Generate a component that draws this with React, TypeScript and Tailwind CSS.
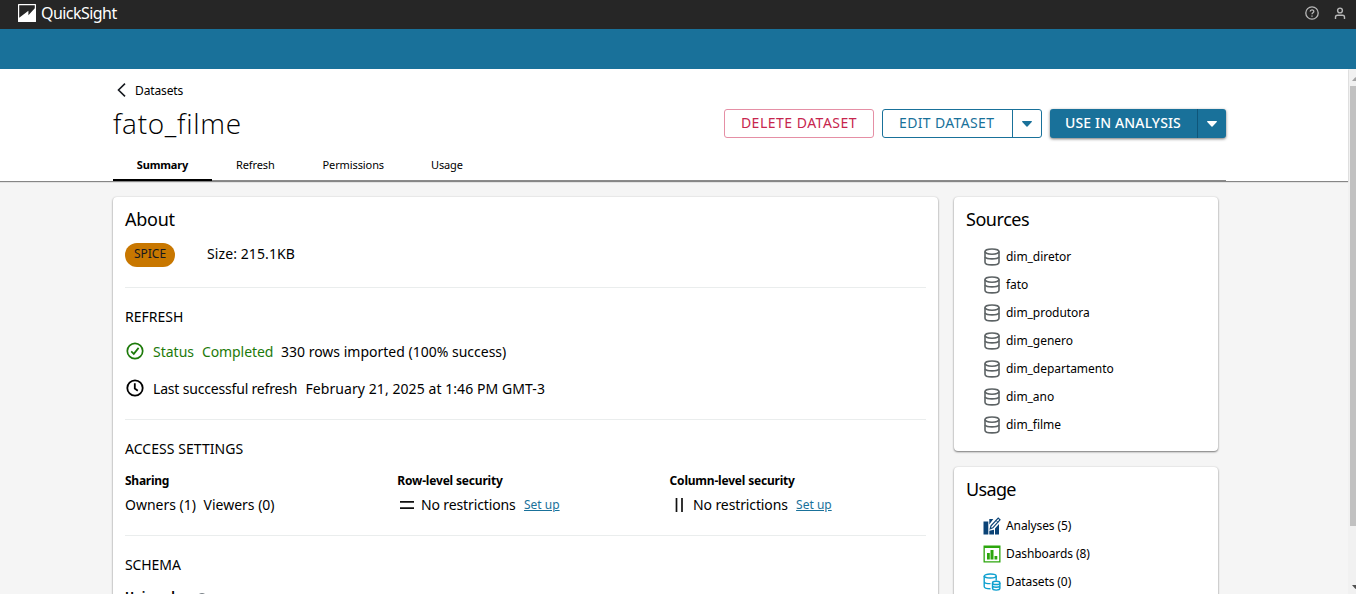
import type { ReactNode } from "react";

function DatabaseIcon() {
  return (
    <svg width="16" height="18" viewBox="0 0 16 18" fill="none" stroke="#5d6365" strokeWidth="1.6">
      <ellipse cx="8" cy="3.6" rx="7" ry="2.6" />
      <path d="M1 3.6v10.6c0 1.7 3.1 2.7 7 2.7s7-1 7-2.7V3.6" />
      <path d="M1 9c1 1.3 3.6 1.9 7 1.9s6-.6 7-1.9" />
    </svg>
  );
}

function AnalysisIcon() {
  return (
    <svg width="18" height="18" viewBox="0 0 18 18">
      <path fill="#0b4376" d="M0.5 4.500h4.800v13H0.500zM6.300 2h4L6.300 7.500zM6.300 13.800l4.700-1V17.500H6.300zM12 11.500l4-4.500v10.500h-4z" />
      <path d="M7.200 11.800l.8-3L15.200 1l1.800 1.800-7.200 8z" fill="#fff" stroke="#0b4376" strokeWidth="1.200" />
      <path d="M13 3.400l1.900 1.900" stroke="#0b4376" strokeWidth="1" />
    </svg>
  );
}

function DashboardIcon() {
  return (
    <svg width="18" height="18" viewBox="0 0 18 18">
      <path fill="#2ca60d" fillRule="evenodd" d="M.5.5h17v17H.5zM1.800 3v13.200h14.400V3z" />
      <path fill="#2ca60d" d="M4 8h2.800v6.500H4zM7.500 5h3v9.500h-3zM11.500 11h2.800v3.500h-2.800z" />
    </svg>
  );
}

function DatasetIcon() {
  return (
    <svg width="18" height="18" viewBox="0 0 18 18" fill="none" stroke="#0fa0cf" strokeWidth="1.4">
      <ellipse cx="7.2" cy="3" rx="6" ry="2" />
      <path d="M1.2 3v10.6c0 1.3 2.4 2.2 6.3 2.2M13.200 3v4.500M1.200 8.400c0 1.300 2.600 2.200 6.300 2.200" />
      <ellipse cx="13.200" cy="9.900" rx="3.700" ry="1.600" />
      <path d="M9.500 9.900v5.400c0 1.100 1.700 1.800 3.700 1.800s3.700-.7 3.700-1.800V9.900M9.500 12.600c0 1.100 1.700 1.700 3.700 1.700s3.700-.6 3.700-1.700" />
    </svg>
  );
}

function Caret() {
  return (
    <svg width="10" height="6" viewBox="0 0 10 6" fill="currentColor">
      <path d="M0 .7Q0 0 .8 0h8.400q.8 0 .8.700L5.500 5.600q-.5.500-1 0z" />
    </svg>
  );
}

const tabs = [
  { label: "Refresh", cls: "ml-6 w-[39px] tracking-[-0.1px]" },
  { label: "Permissions", cls: "ml-[47.500px] w-[61px] tracking-[-0.1px]" },
  { label: "Usage", cls: "ml-[47.500px] w-[32px] tracking-[-0.15px]" },
];

const sources = ["dim_diretor", "fato", "dim_produtora", "dim_genero", "dim_departamento", "dim_ano", "dim_filme"];

const usages: { label: string; icon: ReactNode }[] = [
  { label: "Analyses (5)", icon: <AnalysisIcon /> },
  { label: "Dashboards (8)", icon: <DashboardIcon /> },
  { label: "Datasets (0)", icon: <DatasetIcon /> },
];

function Card({ className, children }: { className: string; children: ReactNode }) {
  return (
    <section className={`rounded-[4px] bg-white px-3 shadow-[0_1px_2px_rgba(0,0,0,0.5),0_0_2px_rgba(0,0,0,0.1)] ${className}`}>
      {children}
    </section>
  );
}

export default function App() {
  return (
    <div className="flex h-[594px] w-[1356px] flex-col overflow-hidden bg-[#f5f5f5] font-['Noto_Sans','Open_Sans',sans-serif] whitespace-nowrap text-black">
      <header className="flex h-[29px] shrink-0 items-start bg-[#262626] pl-[18px]">
        <svg className="mt-1" width="18" height="18" viewBox="0 0 18 18">
          <rect width="18" height="18" rx="0.500" fill="#fff" />
          <path fill="#262626" d="M1.200 1.200h15.600v3L10.400 11.200V6.800L1.200 13.800z" />
        </svg>
        <span className="ml-[5px] h-[27px] w-[77px] text-[16px] leading-[26px] tracking-[-0.55px] text-white">QuickSight</span>
        <div className="ml-auto flex gap-[15px] pt-[6px] pr-[10px]">
          <svg width="14" height="14" viewBox="0 0 14 14" fill="none" stroke="#b8b8b8" strokeWidth="1.300">
            <circle cx="7" cy="7" r="6.200" />
            <path d="M5.200 5.600c0-2.300 3.600-2.300 3.600-.2 0 1.400-1.800 1.300-1.800 2.800M7 9.400v1.300" />
          </svg>
          <svg className="mt-[1px]" width="12" height="13" viewBox="0 0 12 13" fill="none" stroke="#b8b8b8" strokeWidth="1.400">
            <circle cx="6" cy="3.500" r="2.400" />
            <path d="M1.500 12v-1.800c0-1.200.8-2 2-2h5c1.200 0 2 .8 2 2V12" />
          </svg>
        </div>
      </header>
      <div className="h-10 shrink-0 bg-[#19719a]" />
      <div className="flex h-[525px]">
        <div className="flex w-[1348px] flex-col">
          <div className="z-10 h-[112px] shrink-0 bg-white px-[113px] shadow-[0_1px_1px_rgba(0,0,0,0.45)]">
            <div className="flex h-[112px] w-[1113px] flex-col border-b border-[#8a8a8a]">
              <div className="flex h-10 shrink-0 items-center pl-1">
                <svg className="mt-[2px]" width="9" height="14" viewBox="0 0 9 14" fill="none" stroke="#16191f" strokeWidth="1.600">
                  <path d="M8 .6L1.500 7 8 13.400" />
                </svg>
                <span className="ml-[9px] pt-[3px] text-[12px] leading-4 tracking-[-0.12px]">Datasets</span>
              </div>
              <div className="flex h-[29px] shrink-0">
                <h1 className="w-[611px] font-['Open_Sans','Noto_Sans',sans-serif] text-[28px] leading-[29px] font-light tracking-[0.7px]">fato_filme</h1>
                <button className="h-[29px] w-[150px] rounded-[3px] border border-[#e58fa5] pb-px text-[14px] leading-[26px] tracking-[0.5px] text-[#c7254e]">DELETE DATASET</button>
                <div className="ml-2 flex h-[29px] w-[160px] rounded-[3px] border border-[#19719a] text-[14px] leading-[26px] text-[#19719a]">
                  <span className="w-[129px] pl-4 tracking-[0.35px]">EDIT DATASET</span>
                  <span className="flex flex-1 items-center justify-center border-l border-[#19719a]"><Caret /></span>
                </div>
                <div className="ml-2 flex h-[29px] w-[176px] rounded-[3px] bg-[#19719a] text-[14px] leading-[28px] font-medium text-white shadow-[0_1px_3px_rgba(0,0,0,0.55)]">
                  <span className="w-[147px] pl-[15px] tracking-[0.15px]">USE IN ANALYSIS</span>
                  <span className="flex flex-1 items-center justify-center border-l border-[#0f567a]"><Caret /></span>
                </div>
              </div>
              <nav className="mt-[10px] flex h-[33px] shrink-0 text-[11px] leading-[34px]">
                <span className="h-[33px] w-[99px] border-b-2 border-black text-center font-bold tracking-[-0.15px]">Summary</span>
                {tabs.map((t) => (
                  <span key={t.label} className={t.cls}>{t.label}</span>
                ))}
              </nav>
            </div>
          </div>
          <main className="flex gap-4 pt-4 pl-[113px]">
            <Card className="h-[430px] w-[825px]">
              <h2 className="pt-[8px] text-[18px] leading-7 tracking-[-0.25px]">About</h2>
              <div className="mt-[10px] flex h-6 text-[14px]">
                <span className="w-[50px] rounded-full bg-[#c87700] text-center text-[12px] leading-[22px] text-[#16191f]">SPICE</span>
                <span className="ml-8 leading-[22px] tracking-[0.1px]">Size: 215.1KB</span>
              </div>
              <div className="mt-5 h-px bg-[#eaeded]" />
              <h3 className="mt-[19px] text-[14px] leading-5">REFRESH</h3>
              <div className="mt-[13px] flex h-6 items-center text-[14px] leading-6">
                <svg className="-mt-[2px] ml-[1px]" width="18" height="18" viewBox="0 0 18 18" fill="none" stroke="#1d7a0a" strokeWidth="1.700">
                  <circle cx="9" cy="9" r="7.700" />
                  <path d="M5.200 9.400l2.600 2.500 4.800-6" />
                </svg>
                <span className="ml-[9px] w-[49px] text-[#1d7a0a]">Status</span>
                <span className="w-[79px] tracking-[-0.1px] text-[#1d7a0a]">Completed</span>
                <span>330 rows imported (100% success)</span>
              </div>
              <div className="mt-[13px] flex h-6 items-center text-[14px] leading-6">
                <svg className="-mt-[2px] ml-[1px]" width="18" height="18" viewBox="0 0 18 18" fill="none" stroke="#000" strokeWidth="1.800">
                  <circle cx="9" cy="9" r="7.700" />
                  <path d="M8.800 4.300v5.200l3 2.200" />
                </svg>
                <span className="ml-[9px] w-[152.500px] tracking-[-0.18px]">Last successful refresh</span>
                <span className="tracking-[0.07px]">February 21, 2025 at 1:46 PM GMT-3</span>
              </div>
              <div className="mt-[18px] h-px bg-[#eaeded]" />
              <h3 className="mt-[19px] text-[14px] leading-5 tracking-[0.05px]">ACCESS SETTINGS</h3>
              <div className="mt-3 flex">
                <div className="w-[272.300px]">
                  <h4 className="text-[12px] leading-5 font-bold tracking-[-0.25px]">Sharing</h4>
                  <p className="mt-[2px] flex h-[25px] text-[14px] leading-6"><span className="w-[78.500px]">Owners (1)</span><span>Viewers (0)</span></p>
                </div>
                <div className="w-[272.300px]">
                  <h4 className="text-[12px] leading-5 font-bold tracking-[-0.18px]">Row-level security</h4>
                  <p className="mt-px flex items-center text-[14px] leading-6">
                    <svg className="ml-[2.700px]" width="14" height="14" viewBox="0 0 14 14" stroke="#111" strokeWidth="1.700"><path d="M0 3.900h14M0 10.100h14" /></svg>
                    <span className="ml-[7px] w-[103px] tracking-[-0.12px]">No restrictions</span>
                    <a className="pt-px text-[12px] text-[#19719a] underline">Set up</a>
                  </p>
                </div>
                <div>
                  <h4 className="text-[12px] leading-5 font-bold tracking-[-0.2px]">Column-level security</h4>
                  <p className="mt-px flex items-center text-[14px] leading-6">
                    <svg className="ml-[3.500px]" width="14" height="14" viewBox="0 0 14 14" stroke="#111" strokeWidth="1.700"><path d="M3.500 0v14M9 0v14" /></svg>
                    <span className="ml-[6px] w-[103px] tracking-[-0.12px]">No restrictions</span>
                    <a className="pt-px text-[12px] text-[#19719a] underline">Set up</a>
                  </p>
                </div>
              </div>
              <div className="mt-[17px] h-px bg-[#eaeded]" />
              <h3 className="mt-[19px] text-[14px] leading-5 tracking-[-0.1px]">SCHEMA</h3>
              <div className="mt-[12px] flex items-start gap-1">
                <h4 className="text-[12px] leading-5 font-bold">Unique key</h4>
                <svg className="mt-[6px]" width="12" height="12" viewBox="0 0 12 12" fill="none" stroke="#687078"><circle cx="6" cy="6" r="5.400" /><path d="M6 3v1M6 5v4" /></svg>
              </div>
            </Card>
            <div className="flex w-[264px] flex-col gap-4">
              <Card className="h-[254px]">
                <h2 className="pt-[8px] text-[18px] leading-7 tracking-[-0.45px]">Sources</h2>
                <ul className="mt-[10px] pl-[18px]">
                  {sources.map((s) => (
                    <li key={s} className="flex h-7 items-center gap-[6px] text-[12px]"><DatabaseIcon /><span className="tracking-[-0.04px]">{s}</span></li>
                  ))}
                </ul>
              </Card>
              <Card className="h-[200px]">
                <h2 className="pt-[8px] text-[18px] leading-7 tracking-[-0.65px]">Usage</h2>
                <ul className="mt-[9px] pl-[17px]">
                  {usages.map((u) => (
                    <li key={u.label} className="flex h-7 items-center gap-[5px] text-[12px]">{u.icon}<span className="tracking-[-0.1px]">{u.label}</span></li>
                  ))}
                </ul>
              </Card>
            </div>
          </main>
        </div>
        <div className="flex w-2 flex-col overflow-hidden bg-[#f1f1f1] pl-[2px]">
          <svg className="mt-2 ml-[2px] shrink-0" width="7" height="4" viewBox="0 0 7 4" fill="#a3a3a3"><path d="M0 4L3.500 0 7 4z" /></svg>
          <div className="mt-[5px] h-[440px] shrink-0 bg-[#c1c1c1]" />
          <svg className="mt-[59px] ml-[2px] shrink-0" width="7" height="4" viewBox="0 0 7 4" fill="#505050"><path d="M0 0L3.500 4 7 0z" /></svg>
        </div>
      </div>
    </div>
  );
}
